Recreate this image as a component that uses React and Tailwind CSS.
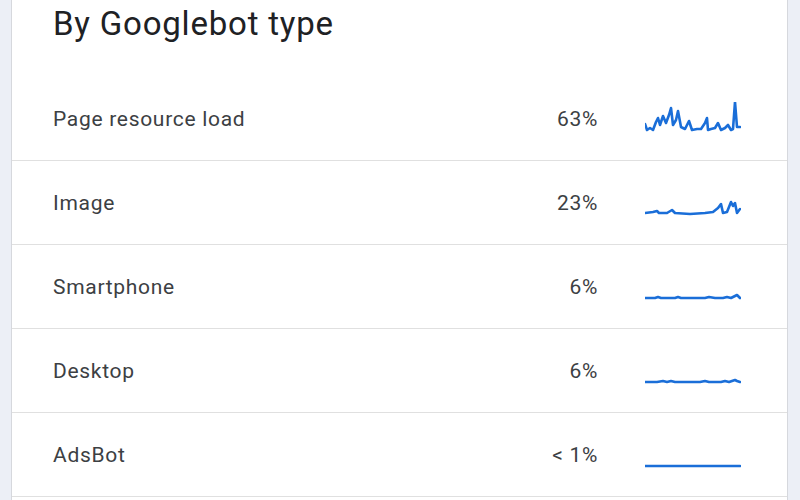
// App.jsx

const rows = [
  {
    label: "Page resource load",
    pct: "63%",
    points:
      "0,22 2,28 5,26 8,28 11,20 13,16 15,23 18,14 21,21 24,13 26,6 28,23 31,18 33,9 36,25 40,27 44,19 47,28 52,27 56,27 60,21 62,16 63,28 66,27 70,26 73,21 76,28 80,26 83,23 86,28 88,27 90,0 92,25 95,25",
  },
  {
    label: "Image",
    pct: "23%",
    points:
      "0,27 8,26 12,25 14,27 22,27 27,24 30,27 45,28 60,27 68,26 73,22 76,18 78,27 82,26 86,16 88,20 90,17 92,27 95,23",
  },
  {
    label: "Smartphone",
    pct: "6%",
    points:
      "0,28 10,28 13,27 16,28 30,28 33,27 36,28 50,28 60,28 64,27 70,28 78,28 82,27 86,28 90,26 92,25 95,28",
  },
  {
    label: "Desktop",
    pct: "6%",
    points:
      "0,28 12,28 18,27 22,28 26,27 30,28 45,28 55,28 60,27 64,28 76,28 80,27 84,28 90,26 92,27 95,28",
  },
  {
    label: "AdsBot",
    pct: "< 1%",
    points: "0,28 95,28",
  },
];

const Sparkline = ({ points }) => (
  <svg width="96" height="34" viewBox="0 0 96 34" className="block">
    <polyline
      points={points}
      fill="none"
      stroke="#1a6ed8"
      strokeWidth="2.6"
      strokeLinejoin="round"
      strokeLinecap="round"
    />
  </svg>
);

export default function App() {
  return (
    <div
      className="h-[500px] overflow-hidden bg-[#eceff6] pl-[11px] pr-[12px]"
      style={{ fontFamily: "Roboto, 'Liberation Sans', sans-serif" }}
    >
      <div className="h-full bg-white border-x border-[#d6d8dd]">
        {/* titre */}
        <div className="h-[77px] pl-[41px] pt-[5px]">
          <h2 className="text-[33px] leading-[38px] tracking-[0.8px] text-[#202124]">
            By Googlebot type
          </h2>
        </div>
        {rows.map((row) => (
          <div
            key={row.label}
            className="flex h-[84px] items-center border-b border-[#e0e0e0] pl-[41px] text-[21px] leading-[28px] tracking-[0.7px] text-[#3c4043]"
          >
            <div className="flex-1">{row.label}</div>
            <div className="text-right">{row.pct}</div>
            <div className="ml-[47px] mr-[46px]">
              <Sparkline points={row.points} />
            </div>
          </div>
        ))}
      </div>
    </div>
  );
}
